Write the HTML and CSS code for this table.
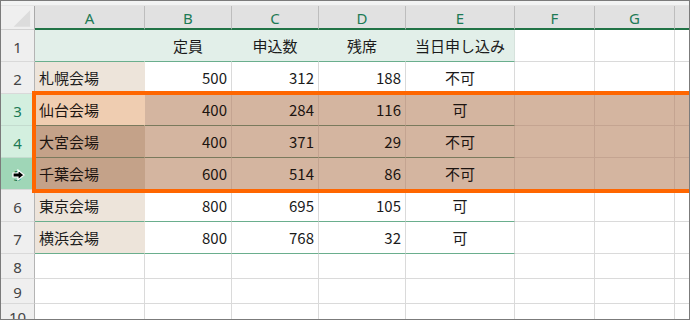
FILE: index.html
```html
<!DOCTYPE html>
<html lang="ja">
<head>
<meta charset="utf-8">
<link rel="stylesheet" href="styles.css">
</head>
<body>
<div class="sheet">
  <div class="grid">
    <div class="strip"></div>

    <div class="corner"><svg width="34" height="24" viewBox="0 0 34 24"><polygon points="13,21 30,4 30,21" fill="#dcdcdc"/></svg></div>
    <div class="ch">A</div><div class="ch">B</div><div class="ch">C</div><div class="ch">D</div><div class="ch">E</div><div class="ch">F</div><div class="ch">G</div><div class="ch"></div>

    <div class="rh">1</div>
    <div class="c mint"></div><div class="c mint ctr">定員</div><div class="c mint ctr">申込数</div><div class="c mint ctr">残席</div><div class="c mint ctr last">当日申し込み</div><div class="c"></div><div class="c"></div><div class="c"></div>

    <div class="rh">2</div>
    <div class="c beige">札幌会場</div><div class="c num">500</div><div class="c num">312</div><div class="c num">188</div><div class="c ctr">不可</div><div class="c"></div><div class="c"></div><div class="c"></div>

    <div class="rh rsel">3</div>
    <div class="c sel a3 gl">仙台会場</div><div class="c sel num gl">400</div><div class="c sel num gl">284</div><div class="c sel num gl">116</div><div class="c sel ctr gl">可</div><div class="c sel"></div><div class="c sel"></div><div class="c sel"></div>

    <div class="rh rsel">4</div>
    <div class="c sel a4 gl">大宮会場</div><div class="c sel num gl">400</div><div class="c sel num gl">371</div><div class="c sel num gl">29</div><div class="c sel ctr gl">不可</div><div class="c sel"></div><div class="c sel"></div><div class="c sel"></div>

    <div class="rh ract">5</div>
    <div class="c sel a4">千葉会場</div><div class="c sel num">600</div><div class="c sel num">514</div><div class="c sel num">86</div><div class="c sel ctr">不可</div><div class="c sel"></div><div class="c sel"></div><div class="c sel"></div>

    <div class="rh">6</div>
    <div class="c beige gb">東京会場</div><div class="c num gb">800</div><div class="c num gb">695</div><div class="c num gb">105</div><div class="c ctr gb">可</div><div class="c"></div><div class="c"></div><div class="c"></div>

    <div class="rh">7</div>
    <div class="c beige gb">横浜会場</div><div class="c num gb">800</div><div class="c num gb">768</div><div class="c num gb">32</div><div class="c ctr gb">可</div><div class="c"></div><div class="c"></div><div class="c"></div>

    <div class="rh">8</div>
    <div class="c"></div><div class="c"></div><div class="c"></div><div class="c"></div><div class="c"></div><div class="c"></div><div class="c"></div><div class="c"></div>

    <div class="rh">9</div>
    <div class="c"></div><div class="c"></div><div class="c"></div><div class="c"></div><div class="c"></div><div class="c"></div><div class="c"></div><div class="c"></div>

    <div class="rh">10</div>
    <div class="c"></div><div class="c"></div><div class="c"></div><div class="c"></div><div class="c"></div><div class="c"></div><div class="c"></div><div class="c"></div>
  </div>

  <div class="highlight"></div>
  <svg class="cursor" width="14" height="12" viewBox="0 0 14 12"><path d="M1 4 H6 V1 L12 6 L6 11 V8 H1 Z" fill="#000" stroke="#fff" stroke-width="1.2" stroke-linejoin="miter"/></svg>
</div>
</body>
</html>
```

FILE: styles.css
```css
* { box-sizing: border-box; }
html, body { margin: 0; padding: 0; background: #fff; }

.sheet {
  position: relative;
  width: 690px;
  height: 320px;
  border: 1px solid #7b7b7b;
  overflow: hidden;
  background: #fff;
}

.grid {
  display: grid;
  width: 754px;
  grid-template-columns: 34px 110px 87px 87px 87px 109px 80px 80px 80px;
  grid-template-rows: 5px 24px repeat(7, 32px) 25px 25px 25px;
  font-family: "Noto Sans CJK JP", "Noto Sans", sans-serif;
  font-size: 15px;
  color: #1b1b1b;
}

.strip {
  grid-column: 1 / -1;
  background: #f2f3f3;
  border-bottom: 1px solid #e4e4e4;
}

.corner {
  background: #efefef;
  border-right: 1px solid #a9a9a9;
  border-bottom: 1px solid #d2d2d2;
  display: flex;
}

.ch {
  background: #e1e1e1;
  border-right: 1px solid #bdbdbd;
  border-bottom: 2px solid #217346;
  color: #1d7a55;
  font-family: "Noto Sans", "Open Sans", sans-serif;
  font-size: 15px;
  display: flex;
  align-items: center;
  justify-content: center;
  padding-top: 1px;
}

.rh {
  background: #efefef;
  border-right: 1px solid #b4b4b4;
  border-bottom: 1px solid #d9d9d9;
  color: #454545;
  font-family: "Noto Sans", "Open Sans", sans-serif;
  font-size: 15px;
  display: flex;
  align-items: center;
  justify-content: center;
  padding-top: 2px;
}
.rh.rsel { background: #d3efdf; color: #1d7a55; border-bottom-color: #c4dccf; }
.rh.ract { background: #9fd6b7; color: #1d7a55; }

.c {
  border-right: 1px solid #dadada;
  border-bottom: 1px solid #dadada;
  display: flex;
  align-items: center;
  padding: 0 4px;
  white-space: nowrap;
}
.num { justify-content: flex-end; }
.ctr { justify-content: center; }

.mint { background: #e2efe9; border-right-color: #e2efe9; border-bottom-color: #6aae8d; }
.mint.last { border-right-color: #d6e2dc; }

.beige { background: #ede4da; border-right-color: #ede4da; }

.gb { border-bottom-color: #6aae8d; }

.sel { background: #d4b5a0; border-right-color: #c4a491; border-bottom-color: #c4a491; color: #1c1410; }
.sel.a3 { background: #efcdb1; border-right-color: #efcdb1; }
.sel.a4 { background: #c4a289; border-right-color: #c4a289; }
.sel.gl { border-bottom-color: #7a7a5d; }

.highlight {
  position: absolute;
  left: 31px;
  top: 90px;
  width: 680px;
  height: 102px;
  border: 4px solid #ff6600;
  pointer-events: none;
}

.cursor {
  position: absolute;
  left: 11px;
  top: 168px;
}
```
